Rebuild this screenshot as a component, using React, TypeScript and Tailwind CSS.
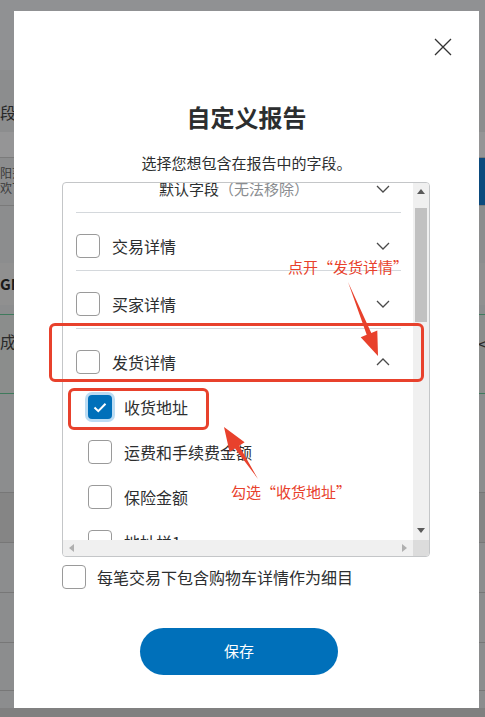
import React from "react";

const FONT = "font-['Microsoft_YaHei','Noto_Sans_CJK_SC','Noto_Sans',sans-serif]";

function Chevron({ up = false }: { up?: boolean }) {
  return (
    <svg width="14" height="8" viewBox="0 0 14 8" className="mr-[11px] shrink-0">
      <path
        d={up ? "M1 7l6-6 6 6" : "M1 1l6 6 6-6"}
        fill="none"
        stroke="#4a4a4a"
        strokeWidth="1.3"
      />
    </svg>
  );
}

function Box({ checked = false }: { checked?: boolean }) {
  if (checked) {
    return (
      <span className="flex h-6 w-6 shrink-0 items-center justify-center rounded-[4px] bg-[#0070ba] ring-[3px] ring-[#bcdcf3]">
        <svg width="14" height="11" viewBox="0 0 14 11">
          <path d="M1.5 5.5l3.8 3.7L12.5 1.8" fill="none" stroke="#fff" strokeWidth="2" />
        </svg>
      </span>
    );
  }
  return <span className="h-6 w-6 shrink-0 rounded-[4px] border border-[#9a9a9a] bg-white" />;
}

function Section({ label, up = false }: { label: string; up?: boolean }) {
  return (
    <div className="border-t border-[#d4d8dc] pb-[12px] pt-[21px]">
      <div className="flex h-6 items-center">
        <Box />
        <span className="ml-3 flex-1 text-[16px] text-[#2c2e2f]">{label}</span>
        <Chevron up={up} />
      </div>
    </div>
  );
}

function SubItem({ label, checked = false }: { label: string; checked?: boolean }) {
  return (
    <div className="flex h-6 items-center pl-3">
      <Box checked={checked} />
      <span className="ml-3 text-[16px] text-[#2c2e2f]">{label}</span>
    </div>
  );
}

// page behind the dimmed overlay, only its edges show
function Backdrop() {
  return (
    <div className="absolute inset-0 bg-[#8c8d8e]">
      <div className="absolute left-0 top-0 h-[70px] w-full bg-[#909193]" />
      <div className="absolute left-0 top-[101px] text-[16px] leading-[22px] text-[#262626]">段</div>
      <div className="absolute left-0 top-[132px] h-[26px] w-full border-b border-[#7b7b7b] bg-[#959596]" />
      <div className="absolute left-0 top-[165px] text-[12px] leading-[15px] text-[#3a3a3a]">
        阳范
        <br />
        欢丁
      </div>
      <div className="absolute right-0 top-[158px] h-[47px] w-[6px] bg-[#0b4a7d]" />
      <div className="absolute left-0 top-[205px] h-px w-full bg-[#7a7a7a]" />
      <div className="absolute left-0 top-[263px] h-[42px] w-full bg-[#909090]" />
      <div className="absolute left-0 top-[274px] text-[15px] font-bold leading-[20px] text-[#1a1a1a]">GM</div>
      <div className="absolute left-0 top-[314px] h-[80px] w-full border-y border-[#3f7a5c] bg-[#8b8d8c]" />
      <div className="absolute left-0 top-[331px] text-[16px] leading-[20px] text-[#2a2a2a]">成把</div>
      <div className="absolute right-[-2px] top-[333px] text-[16px] leading-[20px] text-[#2a2a2a]">&lt;</div>
      <div className="absolute left-0 top-[492px] h-[50px] w-full border-t border-[#777] bg-[#858585]" />
      <div className="absolute left-0 top-[542px] h-px w-full bg-[#777]" />
      <div className="absolute left-0 top-[592px] h-px w-full bg-[#777]" />
      <div className="absolute left-0 top-[642px] h-px w-full bg-[#777]" />
      <div className="absolute left-0 top-[690px] h-px w-full bg-[#777]" />
      <div className="absolute bottom-0 left-0 h-[9px] w-full bg-[#808080]" />
    </div>
  );
}

export default function App() {
  return (
    <div className={`relative h-[717px] w-[485px] overflow-hidden ${FONT}`}>
      <Backdrop />

      <div className="relative pl-[14px] pt-[11px]">
        <div className="relative flex h-[697px] w-[465px] flex-col bg-white px-[48px]">
          <button className="absolute right-[27px] top-[27px] h-[18px] w-[18px]">
            <svg width="18" height="18" viewBox="0 0 18 18">
              <path d="M1 1l16 16M17 1L1 17" stroke="#333" strokeWidth="1.3" />
            </svg>
          </button>

          <h1 className="mt-[90px] text-center text-[24px] font-bold leading-[32px] text-[#2c2e2f]">
            自定义报告
          </h1>
          <p className="mt-[19px] text-center text-[15px] leading-[22px] text-[#2c2e2f]">
            选择您想包含在报告中的字段。
          </p>

          <div className="mt-[8px] flex h-[375px] w-[368px] flex-col overflow-hidden rounded-[4px] border border-[#c4c6c8]">
            <div className="flex h-[357px]">
              <div className="flex-1 overflow-hidden pl-[13px] pr-[12px]">
                <div className="mt-[-6px]">
                  <div className="pb-[11px]">
                    <div className="flex h-6 items-center">
                      <span className="ml-[83px] flex-1 text-[15px] text-[#2c2e2f]">
                        默认字段<span className="text-[#8a8d90]">（无法移除）</span>
                      </span>
                      <Chevron />
                    </div>
                  </div>
                  <Section label="交易详情" />
                  <Section label="买家详情" />
                  <Section label="发货详情" up />
                  <div className="flex flex-col gap-[21px] pt-[9px]">
                    <SubItem label="收货地址" checked />
                    <SubItem label="运费和手续费金额" />
                    <SubItem label="保险金额" />
                    <SubItem label="地址栏1" />
                  </div>
                </div>
              </div>
              <div className="flex w-4 flex-col items-center bg-[#f0f0f0]">
                <svg width="8" height="5" viewBox="0 0 8 5" className="mt-[6px]">
                  <path d="M0 5L4 0l4 5z" fill="#5a5a5a" />
                </svg>
                <div className="mt-[14px] h-[114px] w-[12px] bg-[#c1c1c1]" />
                <div className="flex-1" />
                <svg width="8" height="5" viewBox="0 0 8 5" className="mb-[7px]">
                  <path d="M0 0h8L4 5z" fill="#5a5a5a" />
                </svg>
              </div>
            </div>
            <div className="flex h-4">
              <div className="flex flex-1 items-center justify-between bg-[#f0f0f0] px-[6px]">
                <svg width="5" height="8" viewBox="0 0 5 8">
                  <path d="M5 0v8L0 4z" fill="#b0b0b0" />
                </svg>
                <svg width="5" height="8" viewBox="0 0 5 8">
                  <path d="M0 0v8l5-4z" fill="#b0b0b0" />
                </svg>
              </div>
              <div className="w-4 bg-[#dcdcdc]" />
            </div>
          </div>

          <label className="mt-[8px] flex h-6 items-center">
            <Box />
            <span className="ml-[11px] text-[16px] text-[#2c2e2f]">每笔交易下包含购物车详情作为细目</span>
          </label>

          <button className="ml-[78px] mt-[39px] h-[47px] w-[198px] rounded-full bg-[#0070ba] text-[15px] text-white">
            保存
          </button>
        </div>
      </div>

      {/* annotations */}
      <div className="absolute left-[49px] top-[323px] h-[59px] w-[375px] rounded-[6px] border-[3px] border-[#e8412c]" />
      <div className="absolute left-[68px] top-[388px] h-[42px] w-[141px] rounded-[6px] border-[3px] border-[#e8412c]" />
      <div className="absolute left-[288px] top-[256px] text-[15px] leading-[22px] text-[#e8412c]">
        点开“发货详情”
      </div>
      <div className="absolute left-[231px] top-[481px] text-[15px] leading-[22px] text-[#e8412c]">
        勾选“收货地址”
      </div>
      <svg className="pointer-events-none absolute inset-0" width="485" height="717">
        <polygon
          points="348,282 371.3,332.9 377.3,330.4 378,356 360.7,337.2 366.7,334.7"
          fill="#e8412c"
        />
        <polygon
          points="258,479 239.2,445.7 244.6,442.2 224,427 229.6,452 235,448.5"
          fill="#e8412c"
        />
      </svg>
    </div>
  );
}
